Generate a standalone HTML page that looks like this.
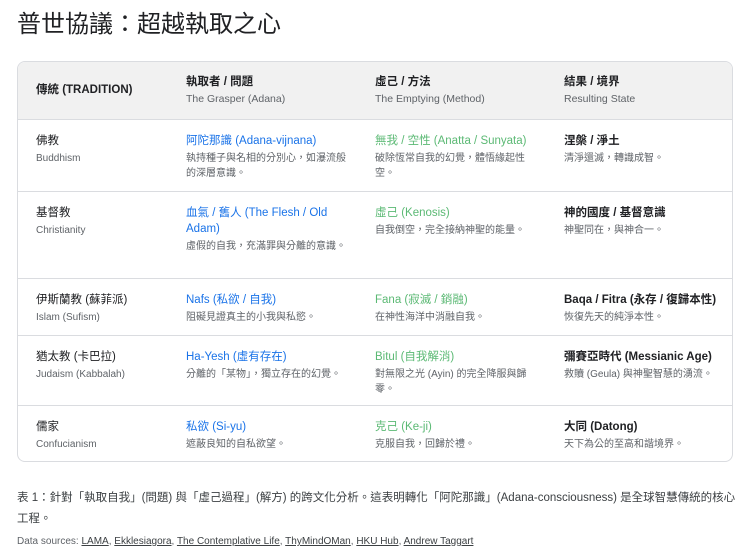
<!DOCTYPE html>
<html><head><meta charset="utf-8"><style>
*{margin:0;padding:0;box-sizing:border-box}
body{width:740px;height:550px;background:#fff;font-family:"Liberation Sans","Noto Sans CJK TC",sans-serif;color:#202124;position:relative;overflow:hidden}
h1{position:absolute;left:17px;top:4px;font-size:24px;font-weight:400;font-family:"Liberation Sans","Noto Sans CJK TC",sans-serif}
.tbl{position:absolute;left:17px;top:61px;width:716px;height:401px;border:1px solid #dadce0;border-radius:8px;overflow:hidden}
.row{position:absolute;left:0;width:100%;border-top:1px solid #dadce0}
.hdr{background:#f1f1f1;border-top:none;top:0;height:57px}
.c{position:absolute;top:0}
.c1{left:18px}.c2{left:168px;width:165px}.c3{left:357px;width:165px}.c4{left:546px;width:160px}
.t{font-size:11.5px;font-weight:700;line-height:16px}
.s{font-size:10px;color:#5f6368;line-height:15px;margin-top:2px}
.b{color:#1a73e8}.g{color:#5bb974}
.cap{position:absolute;left:17px;top:488px;width:720px;font-size:11.5px;line-height:21px;color:#3c4043}
.src{position:absolute;left:17px;top:536px;font-size:10px;color:#5f6368}
.src u{color:#3c4043}
</style></head><body>
<h1>普世協議：超越執取之心</h1>
<div class="tbl">
<div class="row hdr">
<div class="c c1" style="top:20px"><div class="t">傳統 (TRADITION)</div></div>
<div class="c c2" style="top:12px"><div class="t">執取者 / 問題</div><div class="s" style="font-size:10.5px">The Grasper (Adana)</div></div>
<div class="c c3" style="top:12px"><div class="t">虛己 / 方法</div><div class="s" style="font-size:10.5px">The Emptying (Method)</div></div>
<div class="c c4" style="top:12px"><div class="t">結果 / 境界</div><div class="s" style="font-size:10.5px">Resulting State</div></div>
</div>
<div class="row" style="top:57px;height:72px">
<div class="c c1" style="top:13px"><div class="t" style="font-weight:400">佛教</div><div class="s">Buddhism</div></div>
<div class="c c2" style="top:13px"><div class="t b" style="font-weight:400">阿陀那識 (Adana-vijnana)</div><div class="s">執持種子與名相的分別心，如瀑流般的深層意識。</div></div>
<div class="c c3" style="top:13px"><div class="t g" style="font-weight:400">無我 / 空性 (Anatta / Sunyata)</div><div class="s">破除恆常自我的幻覺，體悟緣起性空。</div></div>
<div class="c c4" style="top:13px"><div class="t">涅槃 / 淨土</div><div class="s">清淨還滅，轉識成智。</div></div>
</div>
<div class="row" style="top:129px;height:87px">
<div class="c c1" style="top:13px"><div class="t" style="font-weight:400">基督教</div><div class="s">Christianity</div></div>
<div class="c c2" style="top:13px"><div class="t b" style="font-weight:400">血氣 / 舊人 (The Flesh / Old Adam)</div><div class="s">虛假的自我，充滿罪與分離的意識。</div></div>
<div class="c c3" style="top:13px"><div class="t g" style="font-weight:400">虛己 (Kenosis)</div><div class="s">自我倒空，完全接納神聖的能量。</div></div>
<div class="c c4" style="top:13px"><div class="t">神的國度 / 基督意識</div><div class="s">神聖同在，與神合一。</div></div>
</div>
<div class="row" style="top:216px;height:57px">
<div class="c c1" style="top:13px"><div class="t" style="font-weight:400">伊斯蘭教 (蘇菲派)</div><div class="s">Islam (Sufism)</div></div>
<div class="c c2" style="top:13px"><div class="t b" style="font-weight:400">Nafs (私欲 / 自我)</div><div class="s">阻礙見證真主的小我與私慾。</div></div>
<div class="c c3" style="top:13px"><div class="t g" style="font-weight:400">Fana (寂滅 / 銷融)</div><div class="s">在神性海洋中消融自我。</div></div>
<div class="c c4" style="top:13px"><div class="t">Baqa / Fitra (永存 / 復歸本性)</div><div class="s">恢復先天的純淨本性。</div></div>
</div>
<div class="row" style="top:273px;height:70px">
<div class="c c1" style="top:13px"><div class="t" style="font-weight:400">猶太教 (卡巴拉)</div><div class="s">Judaism (Kabbalah)</div></div>
<div class="c c2" style="top:13px"><div class="t b" style="font-weight:400">Ha-Yesh (虛有存在)</div><div class="s">分離的「某物」，獨立存在的幻覺。</div></div>
<div class="c c3" style="top:13px"><div class="t g" style="font-weight:400">Bitul (自我解消)</div><div class="s">對無限之光 (Ayin) 的完全降服與歸零。</div></div>
<div class="c c4" style="top:13px"><div class="t">彌賽亞時代 (Messianic Age)</div><div class="s">救贖 (Geula) 與神聖智慧的湧流。</div></div>
</div>
<div class="row" style="top:343px;height:58px">
<div class="c c1" style="top:13px"><div class="t" style="font-weight:400">儒家</div><div class="s">Confucianism</div></div>
<div class="c c2" style="top:13px"><div class="t b" style="font-weight:400">私欲 (Si-yu)</div><div class="s">遮蔽良知的自私欲望。</div></div>
<div class="c c3" style="top:13px"><div class="t g" style="font-weight:400">克己 (Ke-ji)</div><div class="s">克服自我，回歸於禮。</div></div>
<div class="c c4" style="top:13px"><div class="t">大同 (Datong)</div><div class="s">天下為公的至高和諧境界。</div></div>
</div>
</div>
<div class="cap">表 1：針對「執取自我」(問題) 與「虛己過程」(解方) 的跨文化分析。這表明轉化「阿陀那識」(Adana-consciousness) 是全球智慧傳統的核心<br>工程。</div>
<div class="src">Data sources: <u>LAMA</u>, <u>Ekklesiagora</u>, <u>The Contemplative Life</u>, <u>ThyMindOMan</u>, <u>HKU Hub</u>, <u>Andrew Taggart</u></div>
</body></html>
